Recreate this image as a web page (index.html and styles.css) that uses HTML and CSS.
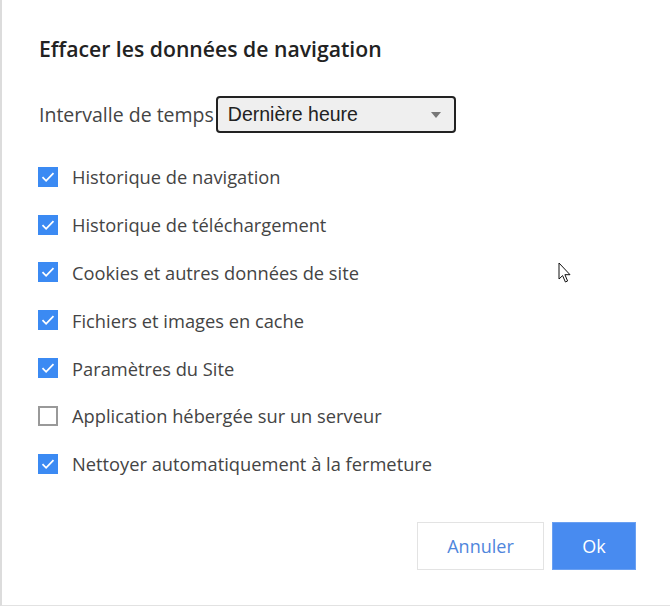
FILE: index.html
```html
<!DOCTYPE html>
<html lang="fr">
<head>
<meta charset="utf-8">
<title>Effacer les données de navigation</title>
<link rel="stylesheet" href="styles.css">
</head>
<body>
<div class="dialog">
  <h1 class="title">Effacer les données de navigation</h1>
  <div class="range">
    <span class="range-label">Intervalle de temps</span>
    <div class="select">
      <span>Dernière heure</span>
      <svg class="caret" width="10" height="6" viewBox="0 0 10 6"><path d="M0 0H10L5 6Z" fill="#777"/></svg>
    </div>
  </div>
  <ul class="options">
    <li class="option"><span class="box checked"><svg viewBox="0 0 20 20" width="20" height="20"><path d="M4.5 10.2l3.6 3.6 7.4-7.6" fill="none" stroke="#fff" stroke-width="1.8"/></svg></span>Historique de navigation</li>
    <li class="option"><span class="box checked"><svg viewBox="0 0 20 20" width="20" height="20"><path d="M4.5 10.2l3.6 3.6 7.4-7.6" fill="none" stroke="#fff" stroke-width="1.8"/></svg></span>Historique de téléchargement</li>
    <li class="option"><span class="box checked"><svg viewBox="0 0 20 20" width="20" height="20"><path d="M4.5 10.2l3.6 3.6 7.4-7.6" fill="none" stroke="#fff" stroke-width="1.8"/></svg></span>Cookies et autres données de site</li>
    <li class="option"><span class="box checked"><svg viewBox="0 0 20 20" width="20" height="20"><path d="M4.5 10.2l3.6 3.6 7.4-7.6" fill="none" stroke="#fff" stroke-width="1.8"/></svg></span>Fichiers et images en cache</li>
    <li class="option"><span class="box checked"><svg viewBox="0 0 20 20" width="20" height="20"><path d="M4.5 10.2l3.6 3.6 7.4-7.6" fill="none" stroke="#fff" stroke-width="1.8"/></svg></span>Paramètres du Site</li>
    <li class="option"><span class="box"></span>Application hébergée sur un serveur</li>
    <li class="option"><span class="box checked"><svg viewBox="0 0 20 20" width="20" height="20"><path d="M4.5 10.2l3.6 3.6 7.4-7.6" fill="none" stroke="#fff" stroke-width="1.8"/></svg></span>Nettoyer automatiquement à la fermeture</li>
  </ul>
  <div class="actions">
    <button class="btn btn-cancel">Annuler</button>
    <button class="btn btn-ok">Ok</button>
  </div>
  <svg class="cursor" width="14" height="22" viewBox="0 0 14 22"><path d="M1 1V17L4.6 13.6L7.4 20L9.6 19L6.9 12.7H12Z" fill="#fff" stroke="#111" stroke-width="1" stroke-linejoin="round"/></svg>
</div>
</body>
</html>
```
FILE: styles.css
```css
html, body {
  margin: 0;
  padding: 0;
  background: #fff;
}
body {
  font-family: "Open Sans", "Noto Sans", sans-serif;
  color: #333;
}
.dialog {
  position: relative;
  width: 668px;
  height: 605px;
  border-left: 2px solid #dcdcdc;
  border-bottom: 1px solid #e2e2e2;
  box-sizing: content-box;
  padding: 0;
}
.title {
  margin: 0;
  padding: 35px 0 0 37px;
  font-size: 21.2px;
  font-weight: 600;
  color: #222;
  line-height: 27px;
}
.range {
  display: flex;
  align-items: center;
  margin: 34px 0 0 37px;
}
.range-label {
  font-size: 19.5px;
  color: #444;
}
.select {
  margin-left: 2px;
  width: 240px;
  height: 37px;
  box-sizing: border-box;
  border: 2px solid #222;
  border-radius: 4px;
  background: #efefef;
  display: flex;
  align-items: center;
  justify-content: space-between;
  padding: 0 13px 0 10px;
  font-family: "Liberation Sans", Arial, sans-serif;
  font-size: 19.5px;
  color: #222;
}
.options {
  list-style: none;
  margin: 20px 0 0 0;
  padding: 0 0 0 36px;
}
.option {
  display: flex;
  align-items: center;
  height: 47.8px;
  font-size: 18.3px;
  color: #444;
}
.box {
  width: 20px;
  height: 20px;
  box-sizing: border-box;
  border: 2px solid #999;
  margin-right: 14px;
  flex: none;
  display: flex;
}
.box.checked {
  background: #3b8af3;
  border: none;
}
.actions {
  display: flex;
  justify-content: flex-end;
  gap: 8px;
  margin: 34px 34px 0 0;
}
.btn {
  height: 48px;
  font-family: "Open Sans", "Noto Sans", sans-serif;
  font-size: 18px;
  cursor: pointer;
}
.btn-cancel {
  width: 127px;
  background: #fff;
  border: 1px solid #e3e3e3;
  color: #4f86dc;
}
.btn-ok {
  width: 84px;
  background: #488bf0;
  border: 1px solid #6aa0f2;
  color: #fff;
}
.cursor {
  position: absolute;
  left: 556px;
  top: 262px;
}
```
